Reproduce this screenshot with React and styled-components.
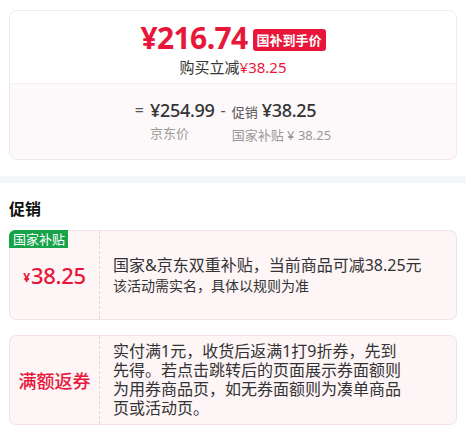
import React from "react";
import styled, { createGlobalStyle } from "styled-components";

const RED = "#e8173a";

const GlobalStyle = createGlobalStyle`
  html, body { margin: 0; padding: 0; background: #fff; }
  body {
    font-family: "Noto Sans", "Noto Sans CJK SC", sans-serif;
    color: #222;
  }
  * { box-sizing: border-box; }
`;

const Page = styled.div`
  width: 466px;
  display: flex;
  flex-direction: column;
`;

const TopSection = styled.section`
  padding: 10px 9px 0;
`;

const PriceCard = styled.div`
  border: 1px solid #f1e6e8;
  border-radius: 8px;
  overflow: hidden;
  height: 150px;
  display: flex;
  flex-direction: column;
`;

const PriceUpper = styled.div`
  height: 72px;
  background: #fff;
  display: flex;
  flex-direction: column;
  align-items: center;
  padding-top: 12px;
`;

const MainPriceRow = styled.div`
  display: flex;
  align-items: center;
  gap: 5px;
  height: 30px;
`;

const MainPrice = styled.span`
  font-family: "Noto Sans", sans-serif;
  font-weight: 700;
  font-size: 30px;
  line-height: 30px;
  color: ${RED};
  letter-spacing: -0.6px;
`;

const RedBadge = styled.span`
  background: ${RED};
  color: #fff;
  font-weight: 700;
  font-size: 13px;
  line-height: 22px;
  height: 22px;
  padding: 0 4px;
  border-radius: 3px;
  margin-top: 4px;
`;

const SubLine = styled.div`
  margin-top: 5px;
  font-size: 15px;
  line-height: 18px;
  color: #333;
`;

const RedText = styled.span`
  color: ${RED};
`;

const PriceLower = styled.div`
  flex: 1;
  background: #fdf8f9;
  border-top: 1px solid #f8eef0;
  display: flex;
  justify-content: center;
  align-items: flex-start;
  padding-top: 15px;
  gap: 6px;
`;

const Operator = styled.span`
  font-size: 16px;
  line-height: 22px;
  color: #555;
`;

const Term = styled.div`
  display: flex;
  flex-direction: column;
  gap: 3px;
`;

const TermValue = styled.div`
  font-size: 18px;
  line-height: 22px;
  color: #333;
  font-weight: 500;
  letter-spacing: -0.3px;
  white-space: nowrap;
`;

const TermTag = styled.span`
  font-size: 13px;
  color: #555;
  margin-right: 4px;
  font-weight: 400;
  letter-spacing: 0;
`;

const TermLabel = styled.div`
  font-size: 13px;
  line-height: 18px;
  color: #999;
  white-space: nowrap;
`;

const Band = styled.div`
  margin-top: 16px;
  height: 7px;
  background: #f5f6f8;
`;

const PromoSection = styled.section`
  padding: 15px 9px 0;
  display: flex;
  flex-direction: column;
`;

const Title = styled.h3`
  margin: 0 0 10px;
  font-size: 16px;
  line-height: 22px;
  font-weight: 700;
  color: #111;
`;

const PromoList = styled.div`
  display: flex;
  flex-direction: column;
  gap: 15px;
`;

const PromoCard = styled.div`
  position: relative;
  height: 90px;
  background: #fdf5f6;
  border: 1px solid #f4e2e5;
  border-radius: 7px;
  display: grid;
  grid-template-columns: 90px 1fr;
`;

const CornerBadge = styled.span`
  position: absolute;
  top: -1px;
  left: -1px;
  background: #17a34a;
  color: #fff;
  font-size: 13px;
  line-height: 18px;
  padding: 0 3px 0 4px;
  border-radius: 6px 0 0 0;
`;

const PromoLeft = styled.div`
  border-right: 1px dashed #e2d6d8;
  display: flex;
  align-items: center;
  justify-content: center;
  color: ${RED};
`;

const Yen = styled.span`
  font-size: 12px;
  font-weight: 700;
  margin-right: 1px;
  margin-top: 4px;
`;

const PromoAmount = styled.span`
  font-size: 22px;
  font-weight: 500;
  letter-spacing: -0.3px;
`;

const PromoName = styled.span`
  font-size: 18px;
  font-weight: 500;
`;

const PromoRight = styled.div`
  padding: 0 10px 0 13px;
  display: flex;
  flex-direction: column;
  justify-content: center;
  color: #333;
`;

const PromoText = styled.div`
  font-size: ${(p) => p.$size || 16}px;
  line-height: ${(p) => p.$lh || 20}px;
  max-width: ${(p) => p.$max || "none"};
`;

export default function App() {
  return (
    <Page>
      <GlobalStyle />
      <TopSection>
        <PriceCard>
          <PriceUpper>
            <MainPriceRow>
              <MainPrice>¥216.74</MainPrice>
              <RedBadge>国补到手价</RedBadge>
            </MainPriceRow>
            <SubLine>
              购买立减<RedText>¥38.25</RedText>
            </SubLine>
          </PriceUpper>
          <PriceLower>
            <Operator>=</Operator>
            <Term>
              <TermValue>¥254.99</TermValue>
              <TermLabel>京东价</TermLabel>
            </Term>
            <Operator>-</Operator>
            <Term>
              <TermValue>
                <TermTag>促销</TermTag>¥38.25
              </TermValue>
              <TermLabel>国家补贴 ¥ 38.25</TermLabel>
            </Term>
          </PriceLower>
        </PriceCard>
      </TopSection>
      <Band />
      <PromoSection>
        <Title>促销</Title>
        <PromoList>
          <PromoCard>
            <CornerBadge>国家补贴</CornerBadge>
            <PromoLeft>
              <Yen>¥</Yen>
              <PromoAmount>38.25</PromoAmount>
            </PromoLeft>
            <PromoRight>
              <PromoText $size={16} $lh={21}>
                国家&amp;京东双重补贴，当前商品可减38.25元
              </PromoText>
              <PromoText $size={14} $lh={20}>
                该活动需实名，具体以规则为准
              </PromoText>
            </PromoRight>
          </PromoCard>
          <PromoCard>
            <PromoLeft>
              <PromoName>满额返券</PromoName>
            </PromoLeft>
            <PromoRight>
              <PromoText $size={16} $lh={19} $max="292px">
                实付满1元，收货后返满1打9折券，先到先得。若点击跳转后的页面展示券面额则为用券商品页，如无券面额则为凑单商品页或活动页。
              </PromoText>
            </PromoRight>
          </PromoCard>
        </PromoList>
      </PromoSection>
    </Page>
  );
}
